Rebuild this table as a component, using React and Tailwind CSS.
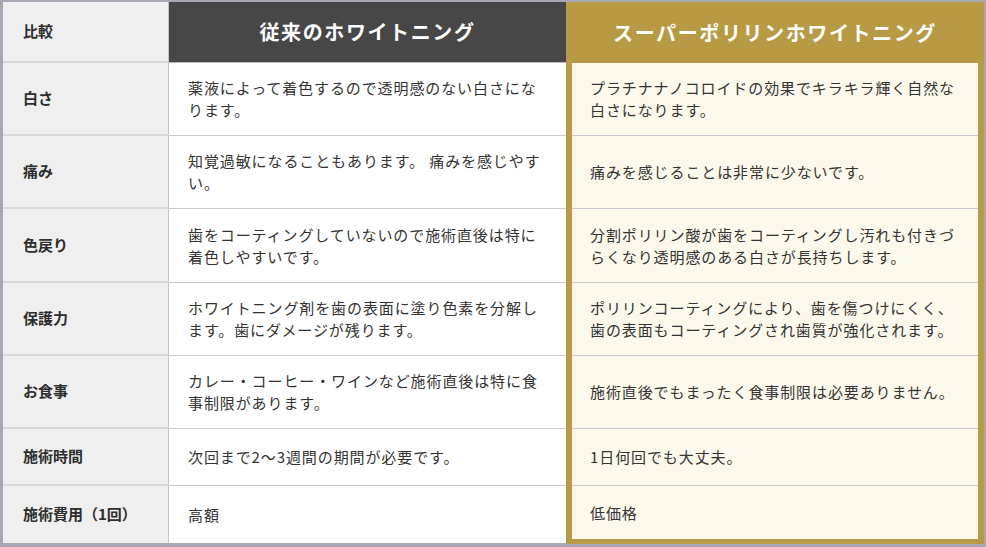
const rows = [
  {
    label: "白さ",
    h: "h-[73px]",
    old: "薬液によって着色するので透明感のない白さになります。",
    poly: "プラチナナノコロイドの効果でキラキラ輝く自然な白さになります。",
  },
  {
    label: "痛み",
    h: "h-[73px]",
    old: "知覚過敏になることもあります。 痛みを感じやすい。",
    poly: "痛みを感じることは非常に少ないです。",
  },
  {
    label: "色戻り",
    h: "h-[74px]",
    old: "歯をコーティングしていないので施術直後は特に着色しやすいです。",
    poly: "分割ポリリン酸が歯をコーティングし汚れも付きづらくなり透明感のある白さが長持ちします。",
  },
  {
    label: "保護力",
    h: "h-[73px]",
    old: "ホワイトニング剤を歯の表面に塗り色素を分解します。歯にダメージが残ります。",
    poly: "ポリリンコーティングにより、歯を傷つけにくく、歯の表面もコーティングされ歯質が強化されます。",
  },
  {
    label: "お食事",
    h: "h-[73px]",
    old: "カレー・コーヒー・ワインなど施術直後は特に食事制限があります。",
    poly: "施術直後でもまったく食事制限は必要ありません。",
  },
  {
    label: "施術時間",
    h: "h-[57px]",
    old: "次回まで2〜3週間の期間が必要です。",
    poly: "1日何回でも大丈夫。",
  },
  {
    label: "施術費用（1回）",
    h: "h-[57px]",
    old: "高額",
    poly: "低価格",
  },
];

const font = "font-['Noto_Sans_CJK_JP','Noto_Sans',sans-serif]";

export default function App() {
  return (
    <div className={`min-h-screen bg-[#a6a9b1] pt-[2px] pl-[3px] pr-[3px] ${font}`}>
      <div className="grid grid-cols-[166px_397px_1fr] text-[#333]">
        {/* header */}
        <div className="h-[61px] bg-[#efefef] border-b-2 border-r border-b-[#d6d8de] border-r-[#c4c6cc] flex items-center pl-[20px] text-[15px] font-semibold text-[#2e2e2e]">
          比較
        </div>
        <div className="h-[61px] bg-[#474747] border-b border-[#b9b9bd] flex items-center justify-center text-white text-[20px] font-bold tracking-[0.08em]">
          従来のホワイトニング
        </div>
        <div className="h-[61px] bg-[#b89a44] -mr-[1px] flex items-center justify-center text-white text-[20px] font-bold tracking-[0.08em]">
          スーパーポリリンホワイトニング
        </div>

        {rows.map((r, i) => {
          const last = i === rows.length - 1;
          return [
            <div
              key={r.label + "a"}
              className={`${r.h} bg-[#efefef] border-r border-r-[#c4c6cc] flex items-center pl-[20px] text-[15px] font-semibold text-[#2e2e2e] ${last ? "" : "border-b-2 border-b-[#d6d8de]"}`}
            >
              {r.label}
            </div>,
            <div
              key={r.label + "b"}
              className={`${r.h} bg-white flex items-center pl-[19px] pr-[16px] text-[15px] leading-[22px] tracking-[0.06em] ${last ? "" : "border-b border-[#c9c9ce]"}`}
            >
              <p>{r.old}</p>
            </div>,
            <div
              key={r.label + "c"}
              className={`${r.h} bg-[#b89a44] px-[6px] -mr-[1px] ${last ? "pb-[5px] h-[58px]" : ""}`}
            >
              <div
                className={`h-full bg-[#fdf8ec] flex items-center pl-[18px] pr-[12px] text-[15px] leading-[22px] tracking-[0.06em] ${last ? "" : "border-b border-[#c9c9ce]"}`}
              >
                <p>{r.poly}</p>
              </div>
            </div>,
          ];
        })}
      </div>
    </div>
  );
}
